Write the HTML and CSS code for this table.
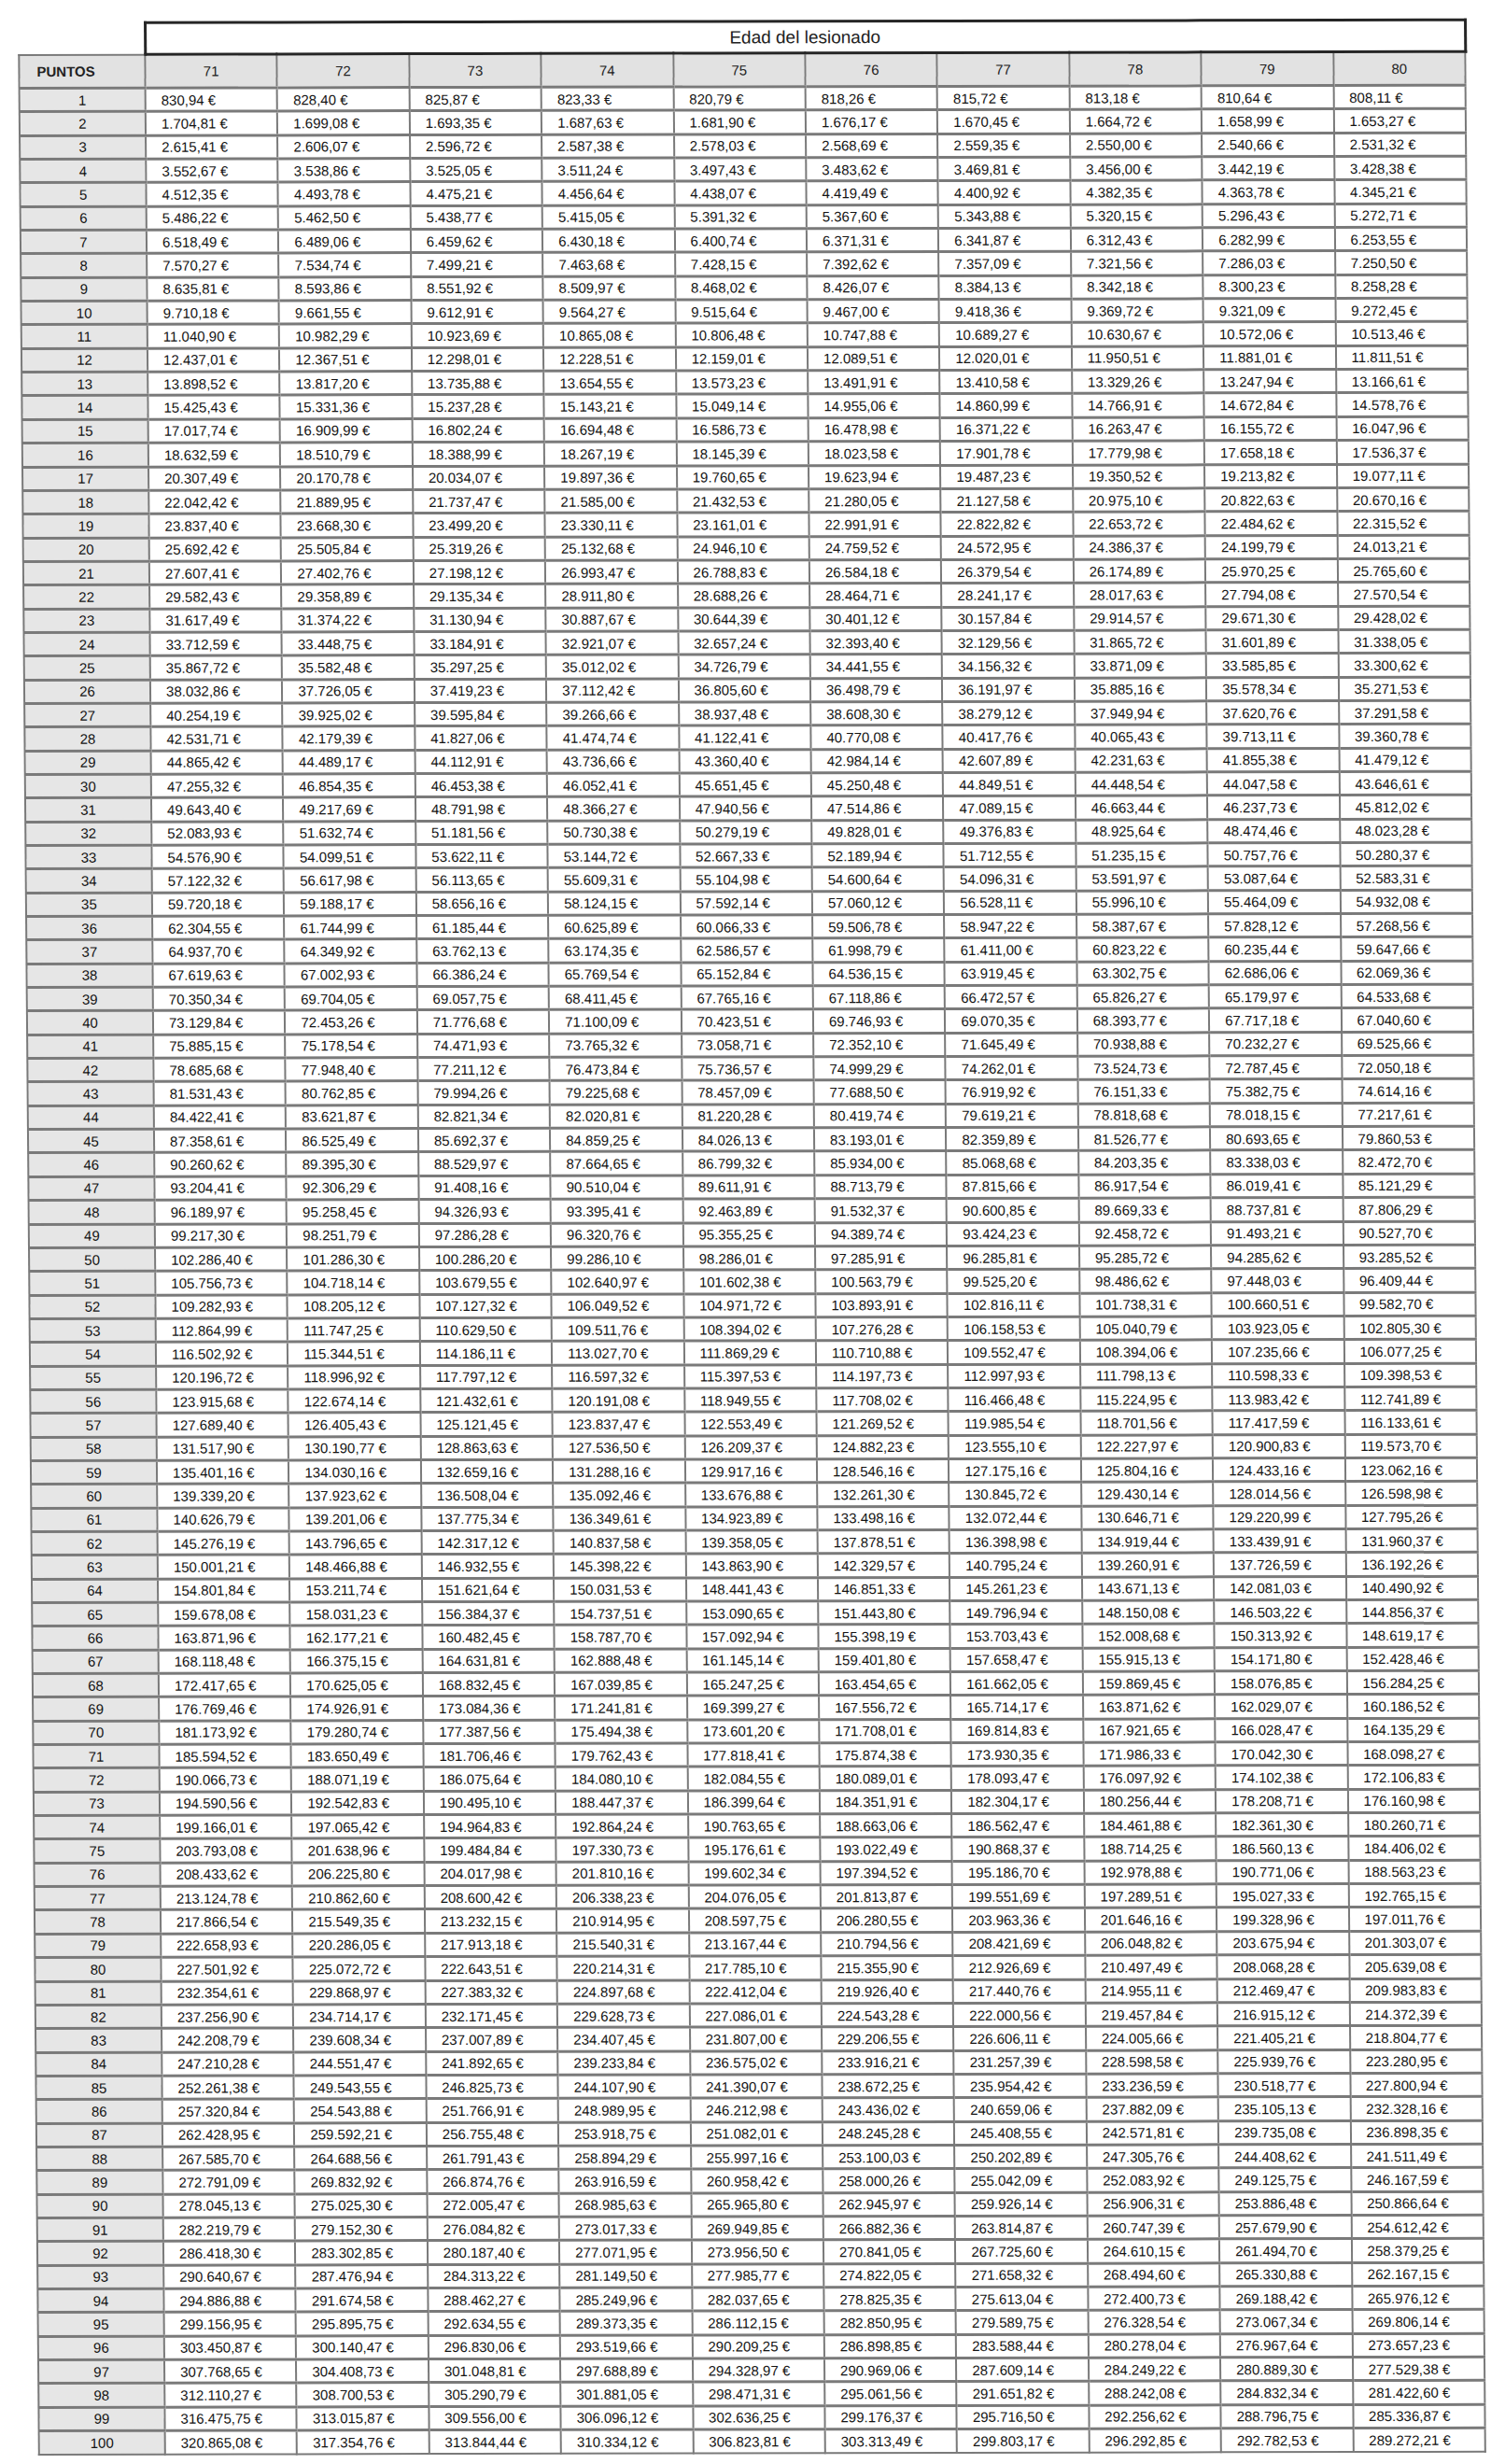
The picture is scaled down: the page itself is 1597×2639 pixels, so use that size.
FILE: index.html
```html
<!DOCTYPE html>
<html lang="es">
<head>
<meta charset="utf-8">
<title>Edad del lesionado</title>
<link rel="stylesheet" href="styles.css">
</head>
<body>
<div class="sheet">
<table class="baremo">
<colgroup><col class="c-pts"><col span="10" class="c-age"></colgroup>
<thead>
<tr class="title-row"><th class="blank"></th><th colspan="10" class="title">Edad del lesionado</th></tr>
<tr class="head-row"><th class="pts">PUNTOS</th><th>71</th><th>72</th><th>73</th><th>74</th><th>75</th><th>76</th><th>77</th><th>78</th><th>79</th><th>80</th></tr>
</thead>
<tbody>
<tr><th>1</th><td>830,94 €</td><td>828,40 €</td><td>825,87 €</td><td>823,33 €</td><td>820,79 €</td><td>818,26 €</td><td>815,72 €</td><td>813,18 €</td><td>810,64 €</td><td>808,11 €</td></tr>
<tr><th>2</th><td>1.704,81 €</td><td>1.699,08 €</td><td>1.693,35 €</td><td>1.687,63 €</td><td>1.681,90 €</td><td>1.676,17 €</td><td>1.670,45 €</td><td>1.664,72 €</td><td>1.658,99 €</td><td>1.653,27 €</td></tr>
<tr><th>3</th><td>2.615,41 €</td><td>2.606,07 €</td><td>2.596,72 €</td><td>2.587,38 €</td><td>2.578,03 €</td><td>2.568,69 €</td><td>2.559,35 €</td><td>2.550,00 €</td><td>2.540,66 €</td><td>2.531,32 €</td></tr>
<tr><th>4</th><td>3.552,67 €</td><td>3.538,86 €</td><td>3.525,05 €</td><td>3.511,24 €</td><td>3.497,43 €</td><td>3.483,62 €</td><td>3.469,81 €</td><td>3.456,00 €</td><td>3.442,19 €</td><td>3.428,38 €</td></tr>
<tr><th>5</th><td>4.512,35 €</td><td>4.493,78 €</td><td>4.475,21 €</td><td>4.456,64 €</td><td>4.438,07 €</td><td>4.419,49 €</td><td>4.400,92 €</td><td>4.382,35 €</td><td>4.363,78 €</td><td>4.345,21 €</td></tr>
<tr><th>6</th><td>5.486,22 €</td><td>5.462,50 €</td><td>5.438,77 €</td><td>5.415,05 €</td><td>5.391,32 €</td><td>5.367,60 €</td><td>5.343,88 €</td><td>5.320,15 €</td><td>5.296,43 €</td><td>5.272,71 €</td></tr>
<tr><th>7</th><td>6.518,49 €</td><td>6.489,06 €</td><td>6.459,62 €</td><td>6.430,18 €</td><td>6.400,74 €</td><td>6.371,31 €</td><td>6.341,87 €</td><td>6.312,43 €</td><td>6.282,99 €</td><td>6.253,55 €</td></tr>
<tr><th>8</th><td>7.570,27 €</td><td>7.534,74 €</td><td>7.499,21 €</td><td>7.463,68 €</td><td>7.428,15 €</td><td>7.392,62 €</td><td>7.357,09 €</td><td>7.321,56 €</td><td>7.286,03 €</td><td>7.250,50 €</td></tr>
<tr><th>9</th><td>8.635,81 €</td><td>8.593,86 €</td><td>8.551,92 €</td><td>8.509,97 €</td><td>8.468,02 €</td><td>8.426,07 €</td><td>8.384,13 €</td><td>8.342,18 €</td><td>8.300,23 €</td><td>8.258,28 €</td></tr>
<tr><th>10</th><td>9.710,18 €</td><td>9.661,55 €</td><td>9.612,91 €</td><td>9.564,27 €</td><td>9.515,64 €</td><td>9.467,00 €</td><td>9.418,36 €</td><td>9.369,72 €</td><td>9.321,09 €</td><td>9.272,45 €</td></tr>
<tr><th>11</th><td>11.040,90 €</td><td>10.982,29 €</td><td>10.923,69 €</td><td>10.865,08 €</td><td>10.806,48 €</td><td>10.747,88 €</td><td>10.689,27 €</td><td>10.630,67 €</td><td>10.572,06 €</td><td>10.513,46 €</td></tr>
<tr><th>12</th><td>12.437,01 €</td><td>12.367,51 €</td><td>12.298,01 €</td><td>12.228,51 €</td><td>12.159,01 €</td><td>12.089,51 €</td><td>12.020,01 €</td><td>11.950,51 €</td><td>11.881,01 €</td><td>11.811,51 €</td></tr>
<tr><th>13</th><td>13.898,52 €</td><td>13.817,20 €</td><td>13.735,88 €</td><td>13.654,55 €</td><td>13.573,23 €</td><td>13.491,91 €</td><td>13.410,58 €</td><td>13.329,26 €</td><td>13.247,94 €</td><td>13.166,61 €</td></tr>
<tr><th>14</th><td>15.425,43 €</td><td>15.331,36 €</td><td>15.237,28 €</td><td>15.143,21 €</td><td>15.049,14 €</td><td>14.955,06 €</td><td>14.860,99 €</td><td>14.766,91 €</td><td>14.672,84 €</td><td>14.578,76 €</td></tr>
<tr><th>15</th><td>17.017,74 €</td><td>16.909,99 €</td><td>16.802,24 €</td><td>16.694,48 €</td><td>16.586,73 €</td><td>16.478,98 €</td><td>16.371,22 €</td><td>16.263,47 €</td><td>16.155,72 €</td><td>16.047,96 €</td></tr>
<tr><th>16</th><td>18.632,59 €</td><td>18.510,79 €</td><td>18.388,99 €</td><td>18.267,19 €</td><td>18.145,39 €</td><td>18.023,58 €</td><td>17.901,78 €</td><td>17.779,98 €</td><td>17.658,18 €</td><td>17.536,37 €</td></tr>
<tr><th>17</th><td>20.307,49 €</td><td>20.170,78 €</td><td>20.034,07 €</td><td>19.897,36 €</td><td>19.760,65 €</td><td>19.623,94 €</td><td>19.487,23 €</td><td>19.350,52 €</td><td>19.213,82 €</td><td>19.077,11 €</td></tr>
<tr><th>18</th><td>22.042,42 €</td><td>21.889,95 €</td><td>21.737,47 €</td><td>21.585,00 €</td><td>21.432,53 €</td><td>21.280,05 €</td><td>21.127,58 €</td><td>20.975,10 €</td><td>20.822,63 €</td><td>20.670,16 €</td></tr>
<tr><th>19</th><td>23.837,40 €</td><td>23.668,30 €</td><td>23.499,20 €</td><td>23.330,11 €</td><td>23.161,01 €</td><td>22.991,91 €</td><td>22.822,82 €</td><td>22.653,72 €</td><td>22.484,62 €</td><td>22.315,52 €</td></tr>
<tr><th>20</th><td>25.692,42 €</td><td>25.505,84 €</td><td>25.319,26 €</td><td>25.132,68 €</td><td>24.946,10 €</td><td>24.759,52 €</td><td>24.572,95 €</td><td>24.386,37 €</td><td>24.199,79 €</td><td>24.013,21 €</td></tr>
<tr><th>21</th><td>27.607,41 €</td><td>27.402,76 €</td><td>27.198,12 €</td><td>26.993,47 €</td><td>26.788,83 €</td><td>26.584,18 €</td><td>26.379,54 €</td><td>26.174,89 €</td><td>25.970,25 €</td><td>25.765,60 €</td></tr>
<tr><th>22</th><td>29.582,43 €</td><td>29.358,89 €</td><td>29.135,34 €</td><td>28.911,80 €</td><td>28.688,26 €</td><td>28.464,71 €</td><td>28.241,17 €</td><td>28.017,63 €</td><td>27.794,08 €</td><td>27.570,54 €</td></tr>
<tr><th>23</th><td>31.617,49 €</td><td>31.374,22 €</td><td>31.130,94 €</td><td>30.887,67 €</td><td>30.644,39 €</td><td>30.401,12 €</td><td>30.157,84 €</td><td>29.914,57 €</td><td>29.671,30 €</td><td>29.428,02 €</td></tr>
<tr><th>24</th><td>33.712,59 €</td><td>33.448,75 €</td><td>33.184,91 €</td><td>32.921,07 €</td><td>32.657,24 €</td><td>32.393,40 €</td><td>32.129,56 €</td><td>31.865,72 €</td><td>31.601,89 €</td><td>31.338,05 €</td></tr>
<tr><th>25</th><td>35.867,72 €</td><td>35.582,48 €</td><td>35.297,25 €</td><td>35.012,02 €</td><td>34.726,79 €</td><td>34.441,55 €</td><td>34.156,32 €</td><td>33.871,09 €</td><td>33.585,85 €</td><td>33.300,62 €</td></tr>
<tr><th>26</th><td>38.032,86 €</td><td>37.726,05 €</td><td>37.419,23 €</td><td>37.112,42 €</td><td>36.805,60 €</td><td>36.498,79 €</td><td>36.191,97 €</td><td>35.885,16 €</td><td>35.578,34 €</td><td>35.271,53 €</td></tr>
<tr><th>27</th><td>40.254,19 €</td><td>39.925,02 €</td><td>39.595,84 €</td><td>39.266,66 €</td><td>38.937,48 €</td><td>38.608,30 €</td><td>38.279,12 €</td><td>37.949,94 €</td><td>37.620,76 €</td><td>37.291,58 €</td></tr>
<tr><th>28</th><td>42.531,71 €</td><td>42.179,39 €</td><td>41.827,06 €</td><td>41.474,74 €</td><td>41.122,41 €</td><td>40.770,08 €</td><td>40.417,76 €</td><td>40.065,43 €</td><td>39.713,11 €</td><td>39.360,78 €</td></tr>
<tr><th>29</th><td>44.865,42 €</td><td>44.489,17 €</td><td>44.112,91 €</td><td>43.736,66 €</td><td>43.360,40 €</td><td>42.984,14 €</td><td>42.607,89 €</td><td>42.231,63 €</td><td>41.855,38 €</td><td>41.479,12 €</td></tr>
<tr><th>30</th><td>47.255,32 €</td><td>46.854,35 €</td><td>46.453,38 €</td><td>46.052,41 €</td><td>45.651,45 €</td><td>45.250,48 €</td><td>44.849,51 €</td><td>44.448,54 €</td><td>44.047,58 €</td><td>43.646,61 €</td></tr>
<tr><th>31</th><td>49.643,40 €</td><td>49.217,69 €</td><td>48.791,98 €</td><td>48.366,27 €</td><td>47.940,56 €</td><td>47.514,86 €</td><td>47.089,15 €</td><td>46.663,44 €</td><td>46.237,73 €</td><td>45.812,02 €</td></tr>
<tr><th>32</th><td>52.083,93 €</td><td>51.632,74 €</td><td>51.181,56 €</td><td>50.730,38 €</td><td>50.279,19 €</td><td>49.828,01 €</td><td>49.376,83 €</td><td>48.925,64 €</td><td>48.474,46 €</td><td>48.023,28 €</td></tr>
<tr><th>33</th><td>54.576,90 €</td><td>54.099,51 €</td><td>53.622,11 €</td><td>53.144,72 €</td><td>52.667,33 €</td><td>52.189,94 €</td><td>51.712,55 €</td><td>51.235,15 €</td><td>50.757,76 €</td><td>50.280,37 €</td></tr>
<tr><th>34</th><td>57.122,32 €</td><td>56.617,98 €</td><td>56.113,65 €</td><td>55.609,31 €</td><td>55.104,98 €</td><td>54.600,64 €</td><td>54.096,31 €</td><td>53.591,97 €</td><td>53.087,64 €</td><td>52.583,31 €</td></tr>
<tr><th>35</th><td>59.720,18 €</td><td>59.188,17 €</td><td>58.656,16 €</td><td>58.124,15 €</td><td>57.592,14 €</td><td>57.060,12 €</td><td>56.528,11 €</td><td>55.996,10 €</td><td>55.464,09 €</td><td>54.932,08 €</td></tr>
<tr><th>36</th><td>62.304,55 €</td><td>61.744,99 €</td><td>61.185,44 €</td><td>60.625,89 €</td><td>60.066,33 €</td><td>59.506,78 €</td><td>58.947,22 €</td><td>58.387,67 €</td><td>57.828,12 €</td><td>57.268,56 €</td></tr>
<tr><th>37</th><td>64.937,70 €</td><td>64.349,92 €</td><td>63.762,13 €</td><td>63.174,35 €</td><td>62.586,57 €</td><td>61.998,79 €</td><td>61.411,00 €</td><td>60.823,22 €</td><td>60.235,44 €</td><td>59.647,66 €</td></tr>
<tr><th>38</th><td>67.619,63 €</td><td>67.002,93 €</td><td>66.386,24 €</td><td>65.769,54 €</td><td>65.152,84 €</td><td>64.536,15 €</td><td>63.919,45 €</td><td>63.302,75 €</td><td>62.686,06 €</td><td>62.069,36 €</td></tr>
<tr><th>39</th><td>70.350,34 €</td><td>69.704,05 €</td><td>69.057,75 €</td><td>68.411,45 €</td><td>67.765,16 €</td><td>67.118,86 €</td><td>66.472,57 €</td><td>65.826,27 €</td><td>65.179,97 €</td><td>64.533,68 €</td></tr>
<tr><th>40</th><td>73.129,84 €</td><td>72.453,26 €</td><td>71.776,68 €</td><td>71.100,09 €</td><td>70.423,51 €</td><td>69.746,93 €</td><td>69.070,35 €</td><td>68.393,77 €</td><td>67.717,18 €</td><td>67.040,60 €</td></tr>
<tr><th>41</th><td>75.885,15 €</td><td>75.178,54 €</td><td>74.471,93 €</td><td>73.765,32 €</td><td>73.058,71 €</td><td>72.352,10 €</td><td>71.645,49 €</td><td>70.938,88 €</td><td>70.232,27 €</td><td>69.525,66 €</td></tr>
<tr><th>42</th><td>78.685,68 €</td><td>77.948,40 €</td><td>77.211,12 €</td><td>76.473,84 €</td><td>75.736,57 €</td><td>74.999,29 €</td><td>74.262,01 €</td><td>73.524,73 €</td><td>72.787,45 €</td><td>72.050,18 €</td></tr>
<tr><th>43</th><td>81.531,43 €</td><td>80.762,85 €</td><td>79.994,26 €</td><td>79.225,68 €</td><td>78.457,09 €</td><td>77.688,50 €</td><td>76.919,92 €</td><td>76.151,33 €</td><td>75.382,75 €</td><td>74.614,16 €</td></tr>
<tr><th>44</th><td>84.422,41 €</td><td>83.621,87 €</td><td>82.821,34 €</td><td>82.020,81 €</td><td>81.220,28 €</td><td>80.419,74 €</td><td>79.619,21 €</td><td>78.818,68 €</td><td>78.018,15 €</td><td>77.217,61 €</td></tr>
<tr><th>45</th><td>87.358,61 €</td><td>86.525,49 €</td><td>85.692,37 €</td><td>84.859,25 €</td><td>84.026,13 €</td><td>83.193,01 €</td><td>82.359,89 €</td><td>81.526,77 €</td><td>80.693,65 €</td><td>79.860,53 €</td></tr>
<tr><th>46</th><td>90.260,62 €</td><td>89.395,30 €</td><td>88.529,97 €</td><td>87.664,65 €</td><td>86.799,32 €</td><td>85.934,00 €</td><td>85.068,68 €</td><td>84.203,35 €</td><td>83.338,03 €</td><td>82.472,70 €</td></tr>
<tr><th>47</th><td>93.204,41 €</td><td>92.306,29 €</td><td>91.408,16 €</td><td>90.510,04 €</td><td>89.611,91 €</td><td>88.713,79 €</td><td>87.815,66 €</td><td>86.917,54 €</td><td>86.019,41 €</td><td>85.121,29 €</td></tr>
<tr><th>48</th><td>96.189,97 €</td><td>95.258,45 €</td><td>94.326,93 €</td><td>93.395,41 €</td><td>92.463,89 €</td><td>91.532,37 €</td><td>90.600,85 €</td><td>89.669,33 €</td><td>88.737,81 €</td><td>87.806,29 €</td></tr>
<tr><th>49</th><td>99.217,30 €</td><td>98.251,79 €</td><td>97.286,28 €</td><td>96.320,76 €</td><td>95.355,25 €</td><td>94.389,74 €</td><td>93.424,23 €</td><td>92.458,72 €</td><td>91.493,21 €</td><td>90.527,70 €</td></tr>
<tr><th>50</th><td>102.286,40 €</td><td>101.286,30 €</td><td>100.286,20 €</td><td>99.286,10 €</td><td>98.286,01 €</td><td>97.285,91 €</td><td>96.285,81 €</td><td>95.285,72 €</td><td>94.285,62 €</td><td>93.285,52 €</td></tr>
<tr><th>51</th><td>105.756,73 €</td><td>104.718,14 €</td><td>103.679,55 €</td><td>102.640,97 €</td><td>101.602,38 €</td><td>100.563,79 €</td><td>99.525,20 €</td><td>98.486,62 €</td><td>97.448,03 €</td><td>96.409,44 €</td></tr>
<tr><th>52</th><td>109.282,93 €</td><td>108.205,12 €</td><td>107.127,32 €</td><td>106.049,52 €</td><td>104.971,72 €</td><td>103.893,91 €</td><td>102.816,11 €</td><td>101.738,31 €</td><td>100.660,51 €</td><td>99.582,70 €</td></tr>
<tr><th>53</th><td>112.864,99 €</td><td>111.747,25 €</td><td>110.629,50 €</td><td>109.511,76 €</td><td>108.394,02 €</td><td>107.276,28 €</td><td>106.158,53 €</td><td>105.040,79 €</td><td>103.923,05 €</td><td>102.805,30 €</td></tr>
<tr><th>54</th><td>116.502,92 €</td><td>115.344,51 €</td><td>114.186,11 €</td><td>113.027,70 €</td><td>111.869,29 €</td><td>110.710,88 €</td><td>109.552,47 €</td><td>108.394,06 €</td><td>107.235,66 €</td><td>106.077,25 €</td></tr>
<tr><th>55</th><td>120.196,72 €</td><td>118.996,92 €</td><td>117.797,12 €</td><td>116.597,32 €</td><td>115.397,53 €</td><td>114.197,73 €</td><td>112.997,93 €</td><td>111.798,13 €</td><td>110.598,33 €</td><td>109.398,53 €</td></tr>
<tr><th>56</th><td>123.915,68 €</td><td>122.674,14 €</td><td>121.432,61 €</td><td>120.191,08 €</td><td>118.949,55 €</td><td>117.708,02 €</td><td>116.466,48 €</td><td>115.224,95 €</td><td>113.983,42 €</td><td>112.741,89 €</td></tr>
<tr><th>57</th><td>127.689,40 €</td><td>126.405,43 €</td><td>125.121,45 €</td><td>123.837,47 €</td><td>122.553,49 €</td><td>121.269,52 €</td><td>119.985,54 €</td><td>118.701,56 €</td><td>117.417,59 €</td><td>116.133,61 €</td></tr>
<tr><th>58</th><td>131.517,90 €</td><td>130.190,77 €</td><td>128.863,63 €</td><td>127.536,50 €</td><td>126.209,37 €</td><td>124.882,23 €</td><td>123.555,10 €</td><td>122.227,97 €</td><td>120.900,83 €</td><td>119.573,70 €</td></tr>
<tr><th>59</th><td>135.401,16 €</td><td>134.030,16 €</td><td>132.659,16 €</td><td>131.288,16 €</td><td>129.917,16 €</td><td>128.546,16 €</td><td>127.175,16 €</td><td>125.804,16 €</td><td>124.433,16 €</td><td>123.062,16 €</td></tr>
<tr><th>60</th><td>139.339,20 €</td><td>137.923,62 €</td><td>136.508,04 €</td><td>135.092,46 €</td><td>133.676,88 €</td><td>132.261,30 €</td><td>130.845,72 €</td><td>129.430,14 €</td><td>128.014,56 €</td><td>126.598,98 €</td></tr>
<tr><th>61</th><td>140.626,79 €</td><td>139.201,06 €</td><td>137.775,34 €</td><td>136.349,61 €</td><td>134.923,89 €</td><td>133.498,16 €</td><td>132.072,44 €</td><td>130.646,71 €</td><td>129.220,99 €</td><td>127.795,26 €</td></tr>
<tr><th>62</th><td>145.276,19 €</td><td>143.796,65 €</td><td>142.317,12 €</td><td>140.837,58 €</td><td>139.358,05 €</td><td>137.878,51 €</td><td>136.398,98 €</td><td>134.919,44 €</td><td>133.439,91 €</td><td>131.960,37 €</td></tr>
<tr><th>63</th><td>150.001,21 €</td><td>148.466,88 €</td><td>146.932,55 €</td><td>145.398,22 €</td><td>143.863,90 €</td><td>142.329,57 €</td><td>140.795,24 €</td><td>139.260,91 €</td><td>137.726,59 €</td><td>136.192,26 €</td></tr>
<tr><th>64</th><td>154.801,84 €</td><td>153.211,74 €</td><td>151.621,64 €</td><td>150.031,53 €</td><td>148.441,43 €</td><td>146.851,33 €</td><td>145.261,23 €</td><td>143.671,13 €</td><td>142.081,03 €</td><td>140.490,92 €</td></tr>
<tr><th>65</th><td>159.678,08 €</td><td>158.031,23 €</td><td>156.384,37 €</td><td>154.737,51 €</td><td>153.090,65 €</td><td>151.443,80 €</td><td>149.796,94 €</td><td>148.150,08 €</td><td>146.503,22 €</td><td>144.856,37 €</td></tr>
<tr><th>66</th><td>163.871,96 €</td><td>162.177,21 €</td><td>160.482,45 €</td><td>158.787,70 €</td><td>157.092,94 €</td><td>155.398,19 €</td><td>153.703,43 €</td><td>152.008,68 €</td><td>150.313,92 €</td><td>148.619,17 €</td></tr>
<tr><th>67</th><td>168.118,48 €</td><td>166.375,15 €</td><td>164.631,81 €</td><td>162.888,48 €</td><td>161.145,14 €</td><td>159.401,80 €</td><td>157.658,47 €</td><td>155.915,13 €</td><td>154.171,80 €</td><td>152.428,46 €</td></tr>
<tr><th>68</th><td>172.417,65 €</td><td>170.625,05 €</td><td>168.832,45 €</td><td>167.039,85 €</td><td>165.247,25 €</td><td>163.454,65 €</td><td>161.662,05 €</td><td>159.869,45 €</td><td>158.076,85 €</td><td>156.284,25 €</td></tr>
<tr><th>69</th><td>176.769,46 €</td><td>174.926,91 €</td><td>173.084,36 €</td><td>171.241,81 €</td><td>169.399,27 €</td><td>167.556,72 €</td><td>165.714,17 €</td><td>163.871,62 €</td><td>162.029,07 €</td><td>160.186,52 €</td></tr>
<tr><th>70</th><td>181.173,92 €</td><td>179.280,74 €</td><td>177.387,56 €</td><td>175.494,38 €</td><td>173.601,20 €</td><td>171.708,01 €</td><td>169.814,83 €</td><td>167.921,65 €</td><td>166.028,47 €</td><td>164.135,29 €</td></tr>
<tr><th>71</th><td>185.594,52 €</td><td>183.650,49 €</td><td>181.706,46 €</td><td>179.762,43 €</td><td>177.818,41 €</td><td>175.874,38 €</td><td>173.930,35 €</td><td>171.986,33 €</td><td>170.042,30 €</td><td>168.098,27 €</td></tr>
<tr><th>72</th><td>190.066,73 €</td><td>188.071,19 €</td><td>186.075,64 €</td><td>184.080,10 €</td><td>182.084,55 €</td><td>180.089,01 €</td><td>178.093,47 €</td><td>176.097,92 €</td><td>174.102,38 €</td><td>172.106,83 €</td></tr>
<tr><th>73</th><td>194.590,56 €</td><td>192.542,83 €</td><td>190.495,10 €</td><td>188.447,37 €</td><td>186.399,64 €</td><td>184.351,91 €</td><td>182.304,17 €</td><td>180.256,44 €</td><td>178.208,71 €</td><td>176.160,98 €</td></tr>
<tr><th>74</th><td>199.166,01 €</td><td>197.065,42 €</td><td>194.964,83 €</td><td>192.864,24 €</td><td>190.763,65 €</td><td>188.663,06 €</td><td>186.562,47 €</td><td>184.461,88 €</td><td>182.361,30 €</td><td>180.260,71 €</td></tr>
<tr><th>75</th><td>203.793,08 €</td><td>201.638,96 €</td><td>199.484,84 €</td><td>197.330,73 €</td><td>195.176,61 €</td><td>193.022,49 €</td><td>190.868,37 €</td><td>188.714,25 €</td><td>186.560,13 €</td><td>184.406,02 €</td></tr>
<tr><th>76</th><td>208.433,62 €</td><td>206.225,80 €</td><td>204.017,98 €</td><td>201.810,16 €</td><td>199.602,34 €</td><td>197.394,52 €</td><td>195.186,70 €</td><td>192.978,88 €</td><td>190.771,06 €</td><td>188.563,23 €</td></tr>
<tr><th>77</th><td>213.124,78 €</td><td>210.862,60 €</td><td>208.600,42 €</td><td>206.338,23 €</td><td>204.076,05 €</td><td>201.813,87 €</td><td>199.551,69 €</td><td>197.289,51 €</td><td>195.027,33 €</td><td>192.765,15 €</td></tr>
<tr><th>78</th><td>217.866,54 €</td><td>215.549,35 €</td><td>213.232,15 €</td><td>210.914,95 €</td><td>208.597,75 €</td><td>206.280,55 €</td><td>203.963,36 €</td><td>201.646,16 €</td><td>199.328,96 €</td><td>197.011,76 €</td></tr>
<tr><th>79</th><td>222.658,93 €</td><td>220.286,05 €</td><td>217.913,18 €</td><td>215.540,31 €</td><td>213.167,44 €</td><td>210.794,56 €</td><td>208.421,69 €</td><td>206.048,82 €</td><td>203.675,94 €</td><td>201.303,07 €</td></tr>
<tr><th>80</th><td>227.501,92 €</td><td>225.072,72 €</td><td>222.643,51 €</td><td>220.214,31 €</td><td>217.785,10 €</td><td>215.355,90 €</td><td>212.926,69 €</td><td>210.497,49 €</td><td>208.068,28 €</td><td>205.639,08 €</td></tr>
<tr><th>81</th><td>232.354,61 €</td><td>229.868,97 €</td><td>227.383,32 €</td><td>224.897,68 €</td><td>222.412,04 €</td><td>219.926,40 €</td><td>217.440,76 €</td><td>214.955,11 €</td><td>212.469,47 €</td><td>209.983,83 €</td></tr>
<tr><th>82</th><td>237.256,90 €</td><td>234.714,17 €</td><td>232.171,45 €</td><td>229.628,73 €</td><td>227.086,01 €</td><td>224.543,28 €</td><td>222.000,56 €</td><td>219.457,84 €</td><td>216.915,12 €</td><td>214.372,39 €</td></tr>
<tr><th>83</th><td>242.208,79 €</td><td>239.608,34 €</td><td>237.007,89 €</td><td>234.407,45 €</td><td>231.807,00 €</td><td>229.206,55 €</td><td>226.606,11 €</td><td>224.005,66 €</td><td>221.405,21 €</td><td>218.804,77 €</td></tr>
<tr><th>84</th><td>247.210,28 €</td><td>244.551,47 €</td><td>241.892,65 €</td><td>239.233,84 €</td><td>236.575,02 €</td><td>233.916,21 €</td><td>231.257,39 €</td><td>228.598,58 €</td><td>225.939,76 €</td><td>223.280,95 €</td></tr>
<tr><th>85</th><td>252.261,38 €</td><td>249.543,55 €</td><td>246.825,73 €</td><td>244.107,90 €</td><td>241.390,07 €</td><td>238.672,25 €</td><td>235.954,42 €</td><td>233.236,59 €</td><td>230.518,77 €</td><td>227.800,94 €</td></tr>
<tr><th>86</th><td>257.320,84 €</td><td>254.543,88 €</td><td>251.766,91 €</td><td>248.989,95 €</td><td>246.212,98 €</td><td>243.436,02 €</td><td>240.659,06 €</td><td>237.882,09 €</td><td>235.105,13 €</td><td>232.328,16 €</td></tr>
<tr><th>87</th><td>262.428,95 €</td><td>259.592,21 €</td><td>256.755,48 €</td><td>253.918,75 €</td><td>251.082,01 €</td><td>248.245,28 €</td><td>245.408,55 €</td><td>242.571,81 €</td><td>239.735,08 €</td><td>236.898,35 €</td></tr>
<tr><th>88</th><td>267.585,70 €</td><td>264.688,56 €</td><td>261.791,43 €</td><td>258.894,29 €</td><td>255.997,16 €</td><td>253.100,03 €</td><td>250.202,89 €</td><td>247.305,76 €</td><td>244.408,62 €</td><td>241.511,49 €</td></tr>
<tr><th>89</th><td>272.791,09 €</td><td>269.832,92 €</td><td>266.874,76 €</td><td>263.916,59 €</td><td>260.958,42 €</td><td>258.000,26 €</td><td>255.042,09 €</td><td>252.083,92 €</td><td>249.125,75 €</td><td>246.167,59 €</td></tr>
<tr><th>90</th><td>278.045,13 €</td><td>275.025,30 €</td><td>272.005,47 €</td><td>268.985,63 €</td><td>265.965,80 €</td><td>262.945,97 €</td><td>259.926,14 €</td><td>256.906,31 €</td><td>253.886,48 €</td><td>250.866,64 €</td></tr>
<tr><th>91</th><td>282.219,79 €</td><td>279.152,30 €</td><td>276.084,82 €</td><td>273.017,33 €</td><td>269.949,85 €</td><td>266.882,36 €</td><td>263.814,87 €</td><td>260.747,39 €</td><td>257.679,90 €</td><td>254.612,42 €</td></tr>
<tr><th>92</th><td>286.418,30 €</td><td>283.302,85 €</td><td>280.187,40 €</td><td>277.071,95 €</td><td>273.956,50 €</td><td>270.841,05 €</td><td>267.725,60 €</td><td>264.610,15 €</td><td>261.494,70 €</td><td>258.379,25 €</td></tr>
<tr><th>93</th><td>290.640,67 €</td><td>287.476,94 €</td><td>284.313,22 €</td><td>281.149,50 €</td><td>277.985,77 €</td><td>274.822,05 €</td><td>271.658,32 €</td><td>268.494,60 €</td><td>265.330,88 €</td><td>262.167,15 €</td></tr>
<tr><th>94</th><td>294.886,88 €</td><td>291.674,58 €</td><td>288.462,27 €</td><td>285.249,96 €</td><td>282.037,65 €</td><td>278.825,35 €</td><td>275.613,04 €</td><td>272.400,73 €</td><td>269.188,42 €</td><td>265.976,12 €</td></tr>
<tr><th>95</th><td>299.156,95 €</td><td>295.895,75 €</td><td>292.634,55 €</td><td>289.373,35 €</td><td>286.112,15 €</td><td>282.850,95 €</td><td>279.589,75 €</td><td>276.328,54 €</td><td>273.067,34 €</td><td>269.806,14 €</td></tr>
<tr><th>96</th><td>303.450,87 €</td><td>300.140,47 €</td><td>296.830,06 €</td><td>293.519,66 €</td><td>290.209,25 €</td><td>286.898,85 €</td><td>283.588,44 €</td><td>280.278,04 €</td><td>276.967,64 €</td><td>273.657,23 €</td></tr>
<tr><th>97</th><td>307.768,65 €</td><td>304.408,73 €</td><td>301.048,81 €</td><td>297.688,89 €</td><td>294.328,97 €</td><td>290.969,06 €</td><td>287.609,14 €</td><td>284.249,22 €</td><td>280.889,30 €</td><td>277.529,38 €</td></tr>
<tr><th>98</th><td>312.110,27 €</td><td>308.700,53 €</td><td>305.290,79 €</td><td>301.881,05 €</td><td>298.471,31 €</td><td>295.061,56 €</td><td>291.651,82 €</td><td>288.242,08 €</td><td>284.832,34 €</td><td>281.422,60 €</td></tr>
<tr><th>99</th><td>316.475,75 €</td><td>313.015,87 €</td><td>309.556,00 €</td><td>306.096,12 €</td><td>302.636,25 €</td><td>299.176,37 €</td><td>295.716,50 €</td><td>292.256,62 €</td><td>288.796,75 €</td><td>285.336,87 €</td></tr>
<tr><th>100</th><td>320.865,08 €</td><td>317.354,76 €</td><td>313.844,44 €</td><td>310.334,12 €</td><td>306.823,81 €</td><td>303.313,49 €</td><td>299.803,17 €</td><td>296.292,85 €</td><td>292.782,53 €</td><td>289.272,21 €</td></tr>
</tbody>
</table>
</div>
</body>
</html>
```

FILE: styles.css
```css
html, body {
  margin: 0;
  padding: 0;
  background: #ffffff;
}

body {
  font-family: "Liberation Sans", Arial, sans-serif;
  color: #141414;
}

.sheet {
  padding: 23px 0 0 19px;
}

/* the scanned page is slightly sheared: the table drifts right toward the bottom */
.baremo {
  border-collapse: collapse;
  table-layout: fixed;
  width: 1549px;
  transform-origin: 0 0;
  transform: skew(0.48deg, -0.12deg);
}

.c-pts {
  width: 135px;
}

.c-age {
  width: 141.4px;
}

.baremo th,
.baremo td {
  padding: 0;
  font-size: 15px;
  line-height: 1;
  white-space: nowrap;
  overflow: hidden;
}

.title-row th {
  height: 31px;
}

.title-row .blank {
  border: none;
  background: transparent;
}

.title-row .title {
  border: 3px solid #262626;
  background: #ffffff;
  font-size: 19px;
  font-weight: normal;
  text-align: center;
  color: #222222;
}

.head-row th {
  height: 33px;
  background: #e2e2e2;
  border: 2px solid #7a7a7a;
  font-weight: normal;
  text-align: center;
  font-size: 15px;
  color: #222222;
}

.head-row .pts {
  text-align: left;
  padding-left: 18px;
  font-weight: bold;
}

.baremo tbody tr {
  height: 25.35px;
}

.baremo tbody th {
  background: #e6e6e6;
  border: 2px solid #7a7a7a;
  border-top-width: 3px;
  font-weight: normal;
  text-align: center;
}

.baremo tbody td {
  background: #ffffff;
  border: 2px solid #7a7a7a;
  border-top-width: 3px;
  text-align: left;
  padding-left: 16px;
}
```
